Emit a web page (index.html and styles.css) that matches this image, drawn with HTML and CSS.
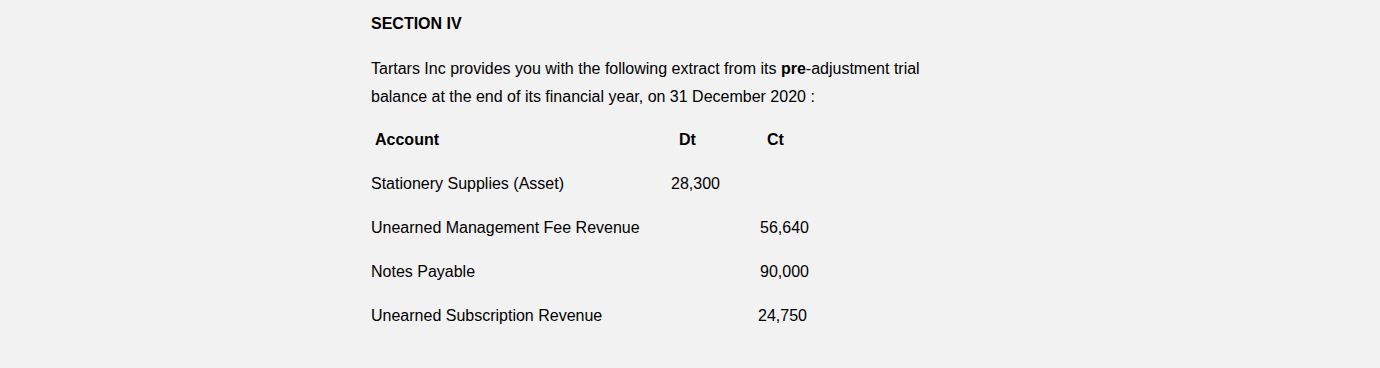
FILE: index.html
```html
<!DOCTYPE html>
<html>
<head>
<meta charset="utf-8">
<link rel="stylesheet" href="styles.css">
</head>
<body>
<div class="page">
  <h2 class="title">SECTION IV</h2>
  <p class="intro">Tartars Inc provides you with the following extract from its <b>pre</b>-adjustment trial balance at the end of its financial year, on 31 December 2020 :</p>
  <div class="table">
    <div class="row head">
      <span class="acct"> Account</span>
      <span class="dt">Dt</span>
      <span class="ct">Ct</span>
    </div>
    <div class="row">
      <span class="acct">Stationery Supplies (Asset)</span>
      <span class="dt">28,300</span>
      <span class="ct"></span>
    </div>
    <div class="row">
      <span class="acct">Unearned Management Fee Revenue</span>
      <span class="dt"></span>
      <span class="ct">56,640</span>
    </div>
    <div class="row">
      <span class="acct">Notes Payable</span>
      <span class="dt"></span>
      <span class="ct">90,000</span>
    </div>
    <div class="row">
      <span class="acct">Unearned Subscription Revenue</span>
      <span class="dt"></span>
      <span class="ct shift">24,750</span>
    </div>
  </div>
</div>
</body>
</html>
```
FILE: styles.css
```css
html, body {
  margin: 0;
  padding: 0;
  background: #f2f2f2;
}
body {
  font-family: "Liberation Sans", Arial, Helvetica, sans-serif;
  font-size: 16px;
  color: #000;
}
.page {
  width: 638px;
  margin: 0 auto;
  padding-top: 15px;
}
.title {
  font-size: 16px;
  font-weight: bold;
  line-height: 18px;
  margin: 0 0 22px 0;
}
.intro {
  margin: 0;
  line-height: 28px;
  width: 590px;
}
.intro b {
  font-weight: bold;
}
.table {
  margin-top: 20px;
  display: flex;
  flex-direction: column;
  gap: 26px;
}
.row {
  display: grid;
  grid-template-columns: 300px 89px 1fr;
  line-height: 18px;
}
.head {
  font-weight: bold;
}
.head .acct {
  padding-left: 4px;
}
.head .dt {
  padding-left: 8px;
}
.head .ct {
  padding-left: 7px;
}
.shift {
  margin-left: -2px;
}
```
